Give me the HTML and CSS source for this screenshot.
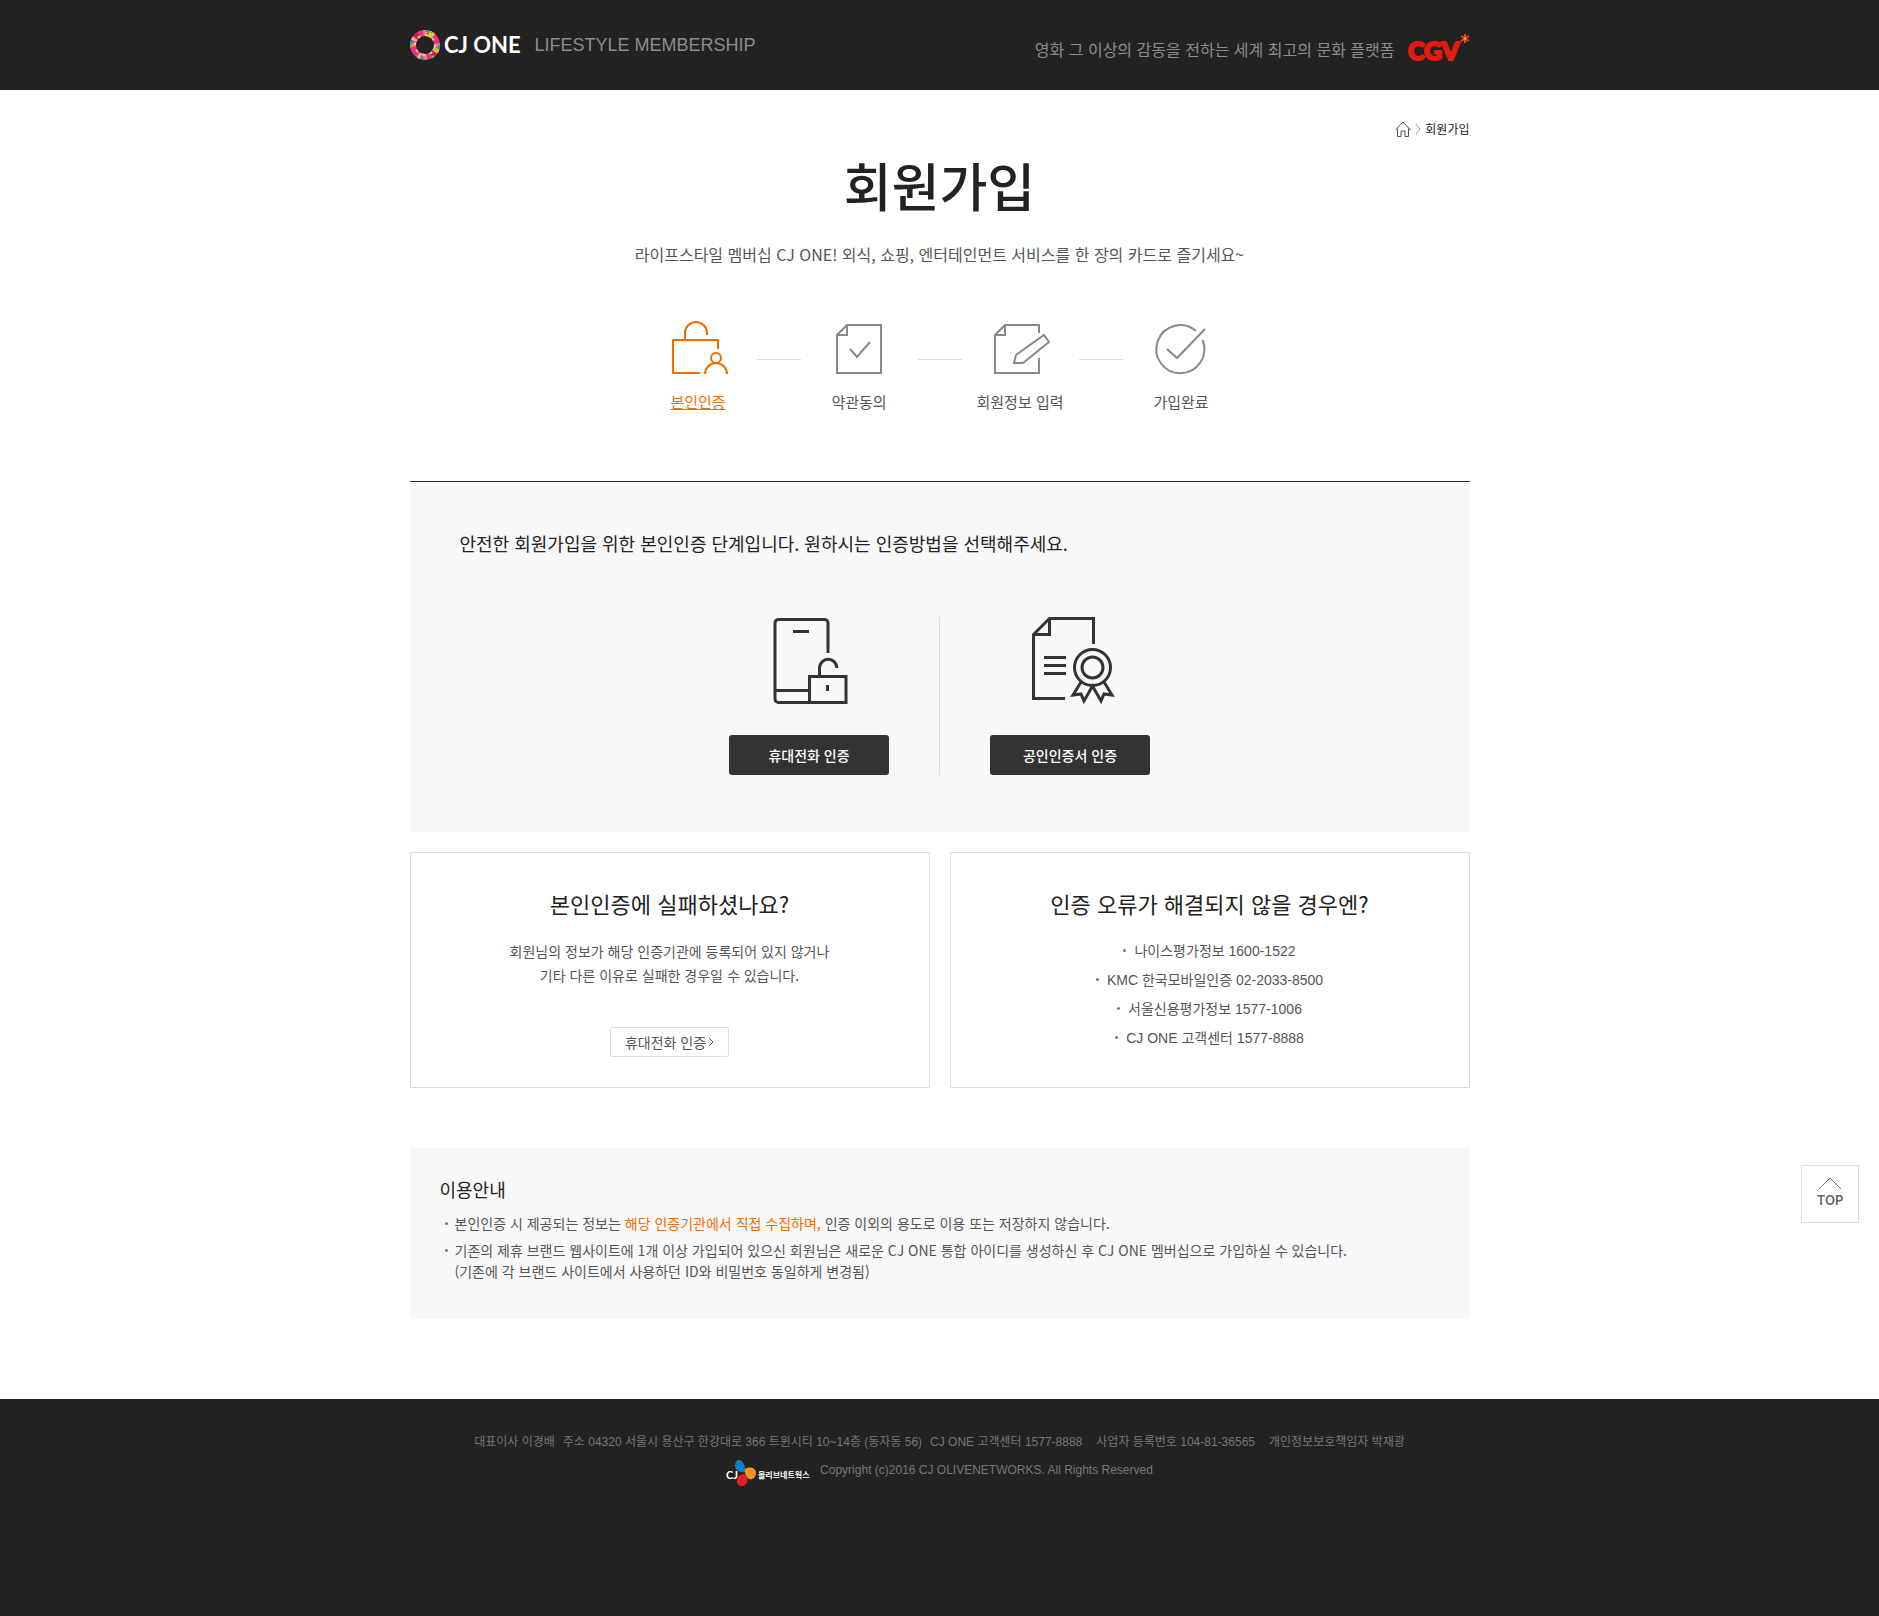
FILE: index.html
```html
<!DOCTYPE html>
<html lang="ko">
<head>
<meta charset="utf-8">
<meta name="viewport" content="width=device-width, initial-scale=1">
<title>회원가입 | CJ ONE</title>
<link rel="stylesheet" href="styles.css">
</head>
<body>
<header class="header">
  <div class="wrap header-inner">
    <a class="brand" href="#" aria-label="CJ ONE">
      <svg class="brand-logo" width="112" height="32" viewBox="0 0 112 32">
        <g fill="none" stroke-width="6">
          <circle cx="15" cy="16" r="12" stroke="#e8308a"/>
          <circle cx="15" cy="16" r="12" stroke="#f58a4b" stroke-dasharray="4 14.85" stroke-dashoffset="2"/>
          <circle cx="15" cy="16" r="12" stroke="#d8b98c" stroke-dasharray="3 15.85" stroke-dashoffset="-4"/>
          <circle cx="15" cy="16" r="12" stroke="#e5172f" stroke-dasharray="4 33.7" stroke-dashoffset="-8"/>
          <circle cx="15" cy="16" r="12" stroke="#b9cf3a" stroke-dasharray="4 71.4" stroke-dashoffset="-3"/>
          <circle cx="15" cy="16" r="12" stroke="#ffcc00" stroke-dasharray="5 70.4" stroke-dashoffset="-60"/>
          <circle cx="15" cy="16" r="14" stroke="#1b93c9" stroke-width="2" stroke-dasharray="4 18"/>
          <circle cx="15" cy="16" r="14" stroke="#6fbf4a" stroke-width="2" stroke-dasharray="3 26.3" stroke-dashoffset="-12"/>
          <circle cx="15" cy="16" r="10" stroke="#cfc6c0" stroke-width="2" stroke-dasharray="3 4.8"/>
        </g>
        <text class="brand-word" x="34" y="24">CJ ONE</text>
      </svg>
      <span class="brand-tag">LIFESTYLE MEMBERSHIP</span>
    </a>
    <a class="partner" href="#" aria-label="CGV">
      <span class="partner-text">영화 그 이상의 감동을 전하는 세계 최고의 문화 플랫폼</span>
      <svg width="64" height="32" viewBox="0 0 64 32">
        <text class="cgv-word" x="2" y="27">CGV</text>
        <g stroke="#e8451b" stroke-width="2"><path d="M59 1v9M55 3l8 5M63 3l-8 5"/></g>
        <circle cx="59" cy="5.500" r="1.500" fill="#f7a823"/>
      </svg>
    </a>
  </div>
</header>

<main class="wrap main">
  <nav class="breadcrumb" aria-label="현재 위치">
    <a href="#" aria-label="홈">
      <svg width="16" height="16" viewBox="0 0 16 16" fill="none" stroke="#555"><path d="M.5 9 8 1l7.500 8M2.500 7.500v8h3.500V10h4v5.500h3.500v-8"/></svg>
    </a>
    <svg width="6" height="12" viewBox="0 0 6 12" fill="none" stroke="#999"><path d="M1 1l4 5-4 5"/></svg>
    <strong>회원가입</strong>
  </nav>
  <h1 class="title">회원가입</h1>
  <p class="lead">라이프스타일 멤버십 CJ ONE! 외식, 쇼핑, 엔터테인먼트 서비스를 한 장의 카드로 즐기세요~</p>

  <ol class="steps">
    <li class="step step-on" aria-current="step">
      <svg width="60" height="56" viewBox="0 0 60 56"><path d="M32 53H5V20H50V29M17 20V13a11 11 0 0 1 22 0V15"/><circle cx="48" cy="38" r="5"/><path d="M37 54a11 11 0 0 1 22 0"/></svg>
      <span>본인인증</span>
    </li>
    <li class="step-line" aria-hidden="true"></li>
    <li class="step">
      <svg width="60" height="56" viewBox="0 0 60 56"><path d="M18 5H52V53H8V15zV15H8M21 29l7 8 13-15"/></svg>
      <span>약관동의</span>
    </li>
    <li class="step-line" aria-hidden="true"></li>
    <li class="step">
      <svg width="60" height="56" viewBox="0 0 60 56"><path d="M49 13V5H15L5 15V53H49V38M15 5V15H5M24 43l2-8 28-20 5 7-26 21z"/></svg>
      <span>회원정보 입력</span>
    </li>
    <li class="step-line" aria-hidden="true"></li>
    <li class="step">
      <svg width="60" height="56" viewBox="0 0 60 56"><path d="M45 11A24 24 0 1 0 51.500 20M16 29l10 9L54 9"/></svg>
      <span>가입완료</span>
    </li>
  </ol>

  <section class="verify">
    <p class="verify-text">안전한 회원가입을 위한 본인인증 단계입니다. 원하시는 인증방법을 선택해주세요.</p>
    <div class="methods">
      <div class="method">
        <svg width="88" height="90" viewBox="0 2 88 90"><path d="M63 38V8a3.500 3.500 0 0 0-3.500-3.500h-46A3.500 3.500 0 0 0 10 8V84a3.500 3.500 0 0 0 3.500 3.500H81v-26H44.500v26M10 75.500H44.500M28 16.500H44M54.500 61.500V53a8.700 8.700 0 0 1 17.400 0M62.500 70v6"/></svg>
        <button class="btn-dark" type="button">휴대전화 인증</button>
      </div>
      <div class="methods-rule"></div>
      <div class="method">
        <svg width="92" height="90" viewBox="0 2 92 90"><path d="M41 83.500H9.500V19.500L25.500 3.500h44V29M25.500 3.500v16H9.500M20 42.500H42M20 50.500H42M20 58.500H42M57 67L49 80l8-1 3 7 8.500-15 8.500 15 3-7 8 1L80 67"/><circle cx="68.500" cy="52.500" r="18"/><circle cx="68.500" cy="52.500" r="10.500"/></svg>
        <button class="btn-dark" type="button">공인인증서 인증</button>
      </div>
    </div>
  </section>

  <div class="cards">
    <section class="card">
      <h2>본인인증에 실패하셨나요?</h2>
      <p class="card-text">회원님의 정보가 해당 인증기관에 등록되어 있지 않거나<br>기타 다른 이유로 실패한 경우일 수 있습니다.</p>
      <button class="btn-line" type="button">휴대전화 인증<svg width="6" height="10" viewBox="0 0 6 10" fill="none" stroke="#555"><path d="M1 1l4 4-4 4"/></svg></button>
    </section>
    <section class="card">
      <h2>인증 오류가 해결되지 않을 경우엔?</h2>
      <ul class="contacts">
        <li>나이스평가정보 1600-1522</li>
        <li>KMC 한국모바일인증 02-2033-8500</li>
        <li>서울신용평가정보 1577-1006</li>
        <li>CJ ONE 고객센터 1577-8888</li>
      </ul>
    </section>
  </div>

  <section class="notice">
    <h2>이용안내</h2>
    <ul>
      <li>본인인증 시 제공되는 정보는 <em>해당 인증기관에서 직접 수집하며,</em> 인증 이외의 용도로 이용 또는 저장하지 않습니다.</li>
      <li>기존의 제휴 브랜드 웹사이트에 1개 이상 가입되어 있으신 회원님은 새로운 CJ ONE 통합 아이디를 생성하신 후 CJ ONE 멤버십으로 가입하실 수 있습니다.<br>(기존에 각 브랜드 사이트에서 사용하던 ID와 비밀번호 동일하게 변경됨)</li>
    </ul>
  </section>
</main>

<footer class="footer">
  <div class="wrap">
    <address class="company">
      <span>대표이사 이경배</span>
      <span>주소 04320 서울시 용산구 한강대로 366 트윈시티 10~14층 (동자동 56)</span>
      <span class="wide">CJ ONE 고객센터 1577-8888</span>
      <span class="wide">사업자 등록번호 104-81-36565</span>
      <span>개인정보보호책임자 박재광</span>
    </address>
    <div class="legal">
      <svg width="86" height="28" viewBox="0 0 86 28" role="img" aria-label="CJ 올리브네트웍스">
        <path fill="#0a7fc6" d="M12 0c4-1 8 5 7 12-4 1-10-1-10-6 0-3 1-5 3-6z"/>
        <path fill="#f7941d" d="M19 9c5-3 11-1 11 4s-4 7-7 6c-3-2-5-6-4-10z"/>
        <path fill="#e31e26" d="M18 14c4 2 5 8 1 11-4 3-9 0-8-5 1-4 4-6 7-6z"/>
        <text class="cj-word" x="0" y="19">CJ</text>
        <text class="cj-name" x="32" y="18">올리브네트웍스</text>
      </svg>
      <small>Copyright (c)2016 CJ OLIVENETWORKS. All Rights Reserved</small>
    </div>
  </div>
</footer>

<a class="to-top" href="#">
  <svg width="24" height="14" viewBox="0 0 24 14" fill="none" stroke="#777"><path d="M1 12L12 1l11 11"/></svg>
  TOP
</a>
</body>
</html>
```
FILE: styles.css
```css
:root {
  --kr: "Noto Sans CJK KR", "Liberation Sans", sans-serif;
  --mixed: "Liberation Sans", "Noto Sans CJK KR", sans-serif;
  --ink: #222;
  --body: #555;
  --accent: #f26d00;
  --line: #ddd;
  --panel: #f8f8f8;
}

* { box-sizing: border-box; }

body {
  margin: 0;
  min-height: 100vh;
  display: flex;
  flex-direction: column;
  background: #fff;
  color: var(--body);
  font: 14px/24px var(--mixed);
}

h1, h2, p, ol, ul { margin: 0; padding: 0; font-weight: 400; }
ol, ul { list-style: none; }
a { color: inherit; text-decoration: none; }
svg { display: block; flex: none; }
button { cursor: pointer; font-family: var(--kr); }

.wrap { width: 100%; max-width: 1060px; margin: 0 auto; }

/* Header */
.header { background: #222; color: #8c8c8c; }
.header-inner {
  height: 90px;
  display: flex;
  align-items: center;
  justify-content: space-between;
}
.brand { display: flex; align-items: center; gap: 13px; }
.brand-word { fill: #fff; font: 700 22px Lato, sans-serif; }
.brand-tag { font-size: 18px; }
.partner { display: flex; align-items: center; gap: 11px; padding-top: 8px; }
.partner-text { font-family: var(--kr); font-size: 16px; }
.cgv-word {
  fill: #e71a0f;
  stroke: #e71a0f;
  stroke-width: 2px;
  stroke-linejoin: round;
  font: 900 25px Lato, sans-serif;
}

/* Page head */
.breadcrumb {
  display: flex;
  align-items: center;
  justify-content: flex-end;
  gap: 4px;
  margin-top: 29px;
  line-height: 20px;
}
.breadcrumb strong {
  color: var(--ink);
  font-family: var(--kr);
  font-size: 12px;
  font-weight: 400;
}
.title {
  margin-top: 16px;
  color: var(--ink);
  font: 500 52px/60px var(--kr);
  text-align: center;
}
.lead {
  margin-top: 27px;
  font-family: var(--kr);
  font-size: 16px;
  text-align: center;
}

/* Steps */
.steps { display: flex; justify-content: center; margin-top: 54px; }
.step {
  width: 117px;
  display: flex;
  flex-direction: column;
  align-items: center;
  gap: 14px;
  font-family: var(--kr);
  font-size: 15px;
}
.step svg { fill: none; stroke: #888; stroke-width: 2; }
.step-line { width: 44px; height: 1px; margin-top: 39px; background: var(--line); }
.step-on { color: var(--accent); text-decoration: underline; }
.step-on svg { stroke: var(--accent); }

/* Verification */
.verify {
  margin-top: 67px;
  padding: 47px 50px 57px;
  border-top: 1px solid var(--ink);
  background: var(--panel);
}
.verify-text { color: var(--ink); font: 18px/28px var(--kr); }
.methods { display: flex; justify-content: center; gap: 50px; margin-top: 60px; }
.methods-rule { width: 1px; background: var(--line); }
.method { display: flex; flex-direction: column; align-items: center; gap: 28px; }
.method svg { fill: none; stroke: #333; stroke-width: 3; }
.btn-dark {
  width: 160px;
  height: 40px;
  padding: 0;
  border: 0;
  border-radius: 3px;
  background: #333;
  color: #fff;
  font-size: 14px;
  font-weight: 500;
}

/* Help cards */
.cards { display: grid; grid-template-columns: 1fr 1fr; gap: 20px; margin-top: 20px; }
.card {
  display: flex;
  flex-direction: column;
  align-items: center;
  padding: 34px 20px 30px;
  border: 1px solid var(--line);
  text-align: center;
}
.card h2 { margin-bottom: 20px; color: var(--ink); font: 22px/32px var(--kr); }
.card-text { font-family: var(--kr); }
.btn-line {
  display: flex;
  align-items: center;
  gap: 2px;
  height: 30px;
  margin-top: 40px;
  padding: 0 14px;
  border: 1px solid var(--line);
  border-radius: 2px;
  background: #fff;
  color: var(--body);
  font-size: 14px;
}
.contacts { display: grid; gap: 5px; }
.contacts li::before {
  content: "";
  display: inline-block;
  width: 3px;
  height: 3px;
  margin-right: 8px;
  border-radius: 50%;
  background: #777;
  vertical-align: 4px;
}

/* Notice */
.notice { margin: 60px 0 80px; padding: 27px 30px 37px; background: var(--panel); }
.notice h2 { color: var(--ink); font: 18px/28px var(--kr); }
.notice ul { display: grid; gap: 6px; margin-top: 10px; }
.notice li {
  position: relative;
  padding-left: 15px;
  font-family: var(--kr);
  line-height: 21px;
}
.notice li::before {
  content: "";
  position: absolute;
  left: 5px;
  top: 9px;
  width: 3px;
  height: 3px;
  border-radius: 50%;
  background: #777;
}
.notice em { color: var(--accent); font-style: normal; }

/* Footer */
.footer {
  flex: 1;
  padding: 33px 0;
  background: #222;
  color: #777;
  font-size: 12px;
  line-height: 20px;
}
.company { display: flex; justify-content: center; gap: 8px; font-style: normal; }
.company .wide { margin-right: 6px; }
.legal { display: flex; justify-content: center; gap: 8px; margin-top: 8px; }
.legal small { font-size: 12px; }
.cj-word { fill: #fff; font: 700 11px Lato, sans-serif; }
.cj-name { fill: #fff; font: 700 8px var(--kr); }

/* Back to top, floats beside the page */
.to-top {
  position: fixed;
  right: 20px;
  bottom: 393px;
  width: 58px;
  height: 58px;
  display: flex;
  flex-direction: column;
  align-items: center;
  gap: 2px;
  padding-top: 11px;
  border: 1px solid var(--line);
  background: #fff;
  color: #666;
  font: 600 13px/14px Inter, sans-serif;
}
```
